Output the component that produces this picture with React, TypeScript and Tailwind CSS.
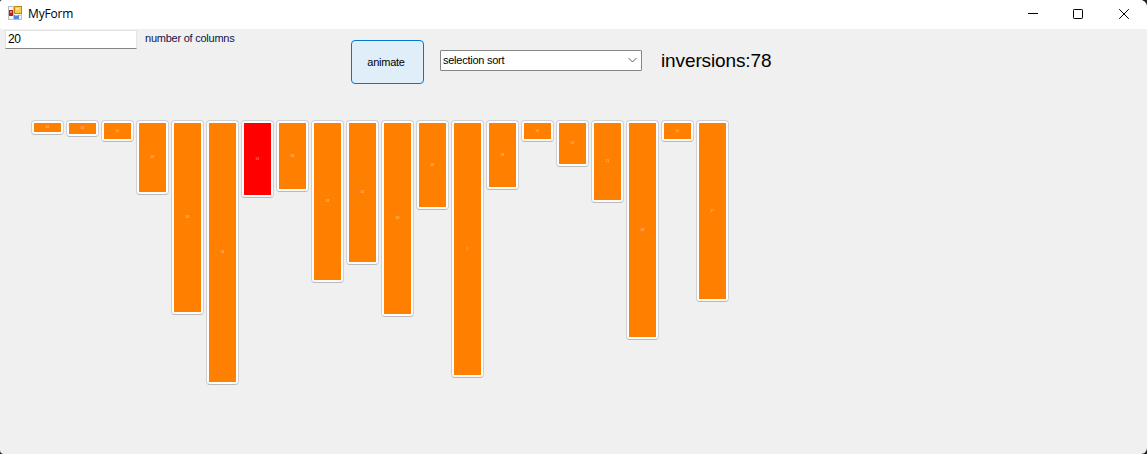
type Bar = { height: number; label: string; active?: boolean };

const bars: Bar[] = [
  { height: 9, label: "10" },
  { height: 11, label: "18" },
  { height: 16, label: "16" },
  { height: 69, label: "18" },
  { height: 189, label: "18" },
  { height: 259, label: "18" },
  { height: 72, label: "18", active: true },
  { height: 66, label: "18" },
  { height: 157, label: "18" },
  { height: 139, label: "18" },
  { height: 191, label: "18" },
  { height: 84, label: "18" },
  { height: 252, label: "1" },
  { height: 64, label: "18" },
  { height: 16, label: "16" },
  { height: 41, label: "18" },
  { height: 77, label: "11" },
  { height: 214, label: "18" },
  { height: 16, label: "16" },
  { height: 176, label: "17" },
];

function FormIcon() {
  return (
    <svg width="14" height="15" viewBox="0 0 14 15" shapeRendering="crispEdges">
      <rect x="0.5" y="0.5" width="13" height="13" fill="#f4f4f4" stroke="#b9bcc0" />
      <path d="M5.5 0v14M0 9.5h14" stroke="#c4c7cb" />
      <rect x="6.5" y="0.5" width="7" height="7" fill="#f8cf45" stroke="#b98a1b" />
      <path d="M8 2h3v2H8z" fill="#ffe995" />
      <rect x="1" y="4" width="4" height="6" fill="#a82420" />
      <rect x="2" y="5" width="2" height="2" fill="#e88173" />
      <rect x="6" y="9" width="5" height="4" fill="#4f86de" />
      <rect x="7" y="9" width="3" height="1" fill="#9cc2fa" />
    </svg>
  );
}

function TitleBar() {
  return (
    <header className="flex h-[29px] items-start bg-white pl-2">
      <div className="pt-[6px]">
        <FormIcon />
      </div>
      <h1 className="ml-[6px] w-[60px] pt-[6px] font-['Open_Sans',sans-serif] text-[12px] leading-4 tracking-[-0.15px] whitespace-nowrap text-black">
        MyForm
      </h1>
      <div className="ml-auto flex text-black">
        <button aria-label="Minimize" className="flex h-[27px] w-[46px] items-center justify-center">
          <svg width="10" height="10" shapeRendering="crispEdges">
            <path d="M0 4.5h10" stroke="currentColor" />
          </svg>
        </button>
        <button aria-label="Maximize" className="flex h-[27px] w-[44px] items-center justify-center">
          <svg width="10" height="10" fill="none">
            <rect x="0.5" y="0.5" width="9" height="9" rx="0.7" stroke="currentColor" />
          </svg>
        </button>
        <button aria-label="Close" className="flex h-[27px] w-[47px] items-center justify-center">
          <svg width="10" height="10">
            <path d="M0.2 0.2l9.6 9.6M9.8 0.2L0.2 9.8" stroke="currentColor" />
          </svg>
        </button>
      </div>
    </header>
  );
}

function Controls() {
  return (
    <div className="flex h-[91px] items-start pl-[5px]">
      <div className="mt-px flex h-[19px] w-[132px] items-center border border-[#e5e5e5] border-b-[#868686] bg-white pb-px pl-[2px] text-[12px] leading-4 tracking-[-0.4px]">
        20
      </div>
      <label className="ml-2 w-[206px] pt-[2px] text-[11px] leading-[14px] tracking-[-0.24px] whitespace-nowrap text-[#12124a]">
        number of columns
      </label>
      <button className="mt-[11px] h-[44px] w-[73px] rounded-[4px] border border-[#0078d4] bg-[#e0eef9] pr-[3px] text-[11px] leading-[14px] tracking-[-0.25px]">
        animate
      </button>
      <div className="mt-[21px] ml-4 flex h-[21px] w-[202px] items-center justify-between rounded-[1px] border border-[#868686] bg-white pr-[4px] pb-px pl-[2px] text-[11px] leading-[14px] tracking-[-0.25px] whitespace-nowrap">
        selection sort
        <svg width="9" height="6" fill="none">
          <path d="M0.5 1l4 4 4-4" stroke="#606060" />
        </svg>
      </div>
      <div className="mt-[21px] ml-[19px] text-[19px] leading-[22px] tracking-[-0.12px] whitespace-nowrap">
        inversions:78
      </div>
    </div>
  );
}

function Column({ bar }: { bar: Bar }) {
  return (
    <div className="w-[33px] rounded-[4px] border border-[#d0d0d0] border-b-[#bababa] bg-[#fdfdfd] p-[2px]">
      <div
        className={
          "flex items-center justify-center overflow-hidden text-[3px] leading-[3px] tracking-[0.4px] text-white/70 " +
          (bar.active ? "bg-[#ff0000]" : "bg-[#ff8000]")
        }
        style={{ height: bar.height }}
      >
        {bar.label}
      </div>
    </div>
  );
}

export default function App() {
  return (
    <div className="h-[454px] w-[1147px] overflow-hidden bg-[#202020]">
      <main className="h-full overflow-hidden rounded-tl-[3px] rounded-tr-[7px] rounded-br-[6px] rounded-bl-[4px] bg-[#f0f0f0] font-['Liberation_Sans',sans-serif] text-black">
        <TitleBar />
        <Controls />
        <section className="flex items-start gap-[2px] pl-[31px]">
          {bars.map((bar, i) => (
            <Column key={i} bar={bar} />
          ))}
        </section>
      </main>
    </div>
  );
}
